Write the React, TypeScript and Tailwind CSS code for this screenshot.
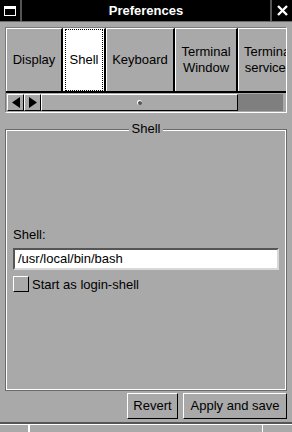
export default function App() {
  const tabs = [
    { label: "Display", w: "w-[57px]" },
    { label: "Shell", w: "w-[43px]", active: true },
    { label: "Keyboard", w: "w-[69px]" },
    { label: "Terminal\nWindow", w: "w-[63px]" },
    { label: "Terminal\nservices", w: "w-[62px]" },
  ];

  return (
    <div className="w-[292px] h-[432px] bg-[#a9a9a9] flex flex-col overflow-hidden font-['Liberation_Sans',Arial,sans-serif] text-black">
      {/* title bar */}
      <div className="h-[22px] bg-black flex border-b border-[#6b6b6b]">
        <div className="w-[22px] flex items-center justify-center border-r-2 border-[#555]">
          <div className="w-[12px] h-[10px] border border-white border-t-[3px]" />
        </div>
        <div className="flex-1 flex items-center justify-center text-white font-bold text-[13px]">
          Preferences
        </div>
        <div className="w-[22px] flex items-center justify-center border-l-2 border-[#555]">
          <svg width="11" height="11" viewBox="0 0 11 11">
            <path d="M1 1L10 10M10 1L1 10" stroke="white" strokeWidth="2.4" />
          </svg>
        </div>
      </div>

      {/* notebook */}
      <div className="mx-[5px] mt-[5px] border border-t-[#7a7a7a] border-l-[#7a7a7a] border-b-white border-r-white">
        <div className="flex border-b-2 border-black h-[65px] overflow-hidden">
          {tabs.map((t) => (
            <div
              key={t.label}
              className={`${t.w} shrink-0 h-full flex items-center justify-center border-t border-l border-t-white border-l-white border-r-2 border-r-black text-[13px] leading-[16px] text-center whitespace-pre ${
                t.active ? "bg-white" : "bg-[#a9a9a9]"
              }`}
            >
              {t.active ? (
                <div className="w-full h-full m-[1px] border border-dotted border-black flex items-center justify-center">
                  {t.label}
                </div>
              ) : (
                <span>{t.label}</span>
              )}
            </div>
          ))}
        </div>
        <div className="flex h-[19px] px-[1px] py-[1px]">
          <div className="w-[17px] h-[17px] flex items-center justify-center border border-t-white border-l-white border-b-black border-r-black">
            <svg width="10" height="11" viewBox="0 0 10 11">
              <path d="M9 0L1 5.5L9 11Z" fill="black" />
            </svg>
          </div>
          <div className="w-[17px] h-[17px] flex items-center justify-center border border-t-white border-l-white border-b-black border-r-black">
            <svg width="10" height="11" viewBox="0 0 10 11">
              <path d="M1 0L9 5.5L1 11Z" fill="black" />
            </svg>
          </div>
          <div className="w-[197px] h-[17px] flex items-center justify-center border border-t-white border-l-white border-b-black border-r-black">
            <div className="w-[5px] h-[5px] rounded-full bg-[#555] border-t border-l border-white" />
          </div>
          <div className="flex-1 h-[17px] bg-[#7f7f7f] mr-[2px]" />
        </div>
      </div>

      {/* shell group */}
      <div className="mx-[5px] mt-[16px] h-[262px] relative border border-[#6b6b6b]">
        <div className="h-full border border-white flex flex-col justify-end px-[6px] pb-[95px]">
          <div className="text-[13px] mb-[3px]">Shell:</div>
          <div className="h-[22px] bg-white border-2 border-t-[#555] border-l-[#555] border-b-[#d8d8d8] border-r-[#d8d8d8] flex items-center px-[3px] text-[13px]">
            /usr/local/bin/bash
          </div>
          <div className="flex items-center mt-[5px] gap-[3px] text-[13px]">
            <div className="w-[16px] h-[16px] border border-t-white border-l-white border-b-black border-r-black" />
            Start as login-shell
          </div>
        </div>
        <div className="absolute -top-[9px] left-0 right-0 flex justify-center">
          <span className="bg-[#a9a9a9] px-[3px] text-[13px] leading-[16px]">Shell</span>
        </div>
      </div>

      {/* buttons */}
      <div className="flex justify-end gap-[5px] mt-[2px] mr-[5px]">
        <div className="w-[51px] h-[26px] flex items-center justify-center text-[13px] border border-t-white border-l-white border-b-black border-r-black">
          Revert
        </div>
        <div className="w-[104px] h-[26px] flex items-center justify-center text-[13px] border border-t-white border-l-white border-b-black border-r-black">
          Apply and save
        </div>
      </div>

      {/* status bar */}
      <div className="mt-[3px] flex-1 border-t-2 border-t-[#555] flex">
        <div className="w-[30px] border-t border-t-white border-r-2 border-r-white" />
        <div className="flex-1 border-t border-t-white border-r border-r-white" />
        <div className="w-[29px] border-t border-t-white" />
      </div>
    </div>
  );
}
